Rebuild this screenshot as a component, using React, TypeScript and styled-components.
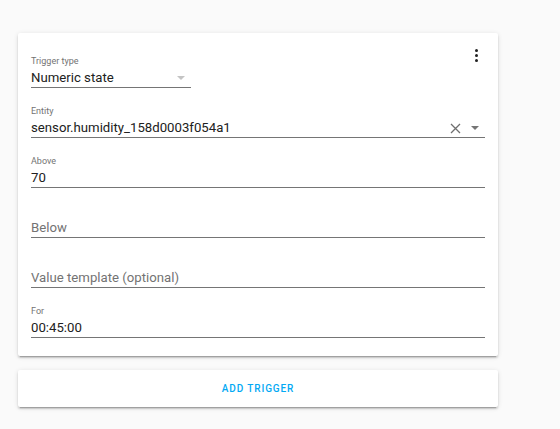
import React from 'react';
import styled, {createGlobalStyle} from 'styled-components';

const GlobalStyle = createGlobalStyle`
  html, body {
    margin: 0;
    background: #fafafa;
    font-family: Roboto, "Noto Sans", Arial, sans-serif;
  }
`;

const Page = styled.div`
  padding: 33px 0 20px 18px;
  width: 480px;
  display: flex;
  flex-direction: column;
  gap: 14px;
`;

const Card = styled.div`
  position: relative;
  background: #fff;
  border-radius: 2px;
  box-shadow: 0 2px 2px 0 rgba(0, 0, 0, 0.14), 0 1px 5px 0 rgba(0, 0, 0, 0.12), 0 3px 1px -2px rgba(0, 0, 0, 0.2);
`;

const Body = styled.div`
  padding: 23px 13px 18px;
  display: flex;
  flex-direction: column;
  gap: 18px;
`;

const Field = styled.div<{$width?: number}>`
  width: ${p => (p.$width ? `${p.$width}px` : 'auto')};
  border-bottom: 1px solid #757575;
`;

const Label = styled.div`
  height: 11px;
  line-height: 11px;
  font-size: 9px;
  color: #737373;
  margin-bottom: 2px;
`;

const InputRow = styled.div`
  display: flex;
  align-items: center;
  height: 18px;
  line-height: 18px;
  font-size: 13.2px;
`;

const Value = styled.span<{$placeholder?: boolean}>`
  flex: 1;
  color: ${p => (p.$placeholder ? '#737373' : '#212121')};
  white-space: nowrap;
`;

const IconBox = styled.span`
  display: flex;
  align-items: center;
  justify-content: center;
  width: 20px;
  height: 18px;
`;

const MenuButton = styled.span`
  position: absolute;
  top: 16px;
  right: 20px;
  display: flex;
  flex-direction: column;
  gap: 2px;
  align-items: center;
`;

const Dot = styled.span`
  width: 3px;
  height: 3px;
  border-radius: 50%;
  background: #212121;
`;

const ActionCard = styled(Card)`
  height: 37px;
  display: flex;
  align-items: center;
  justify-content: center;
`;

const ActionButton = styled.button`
  border: none;
  background: none;
  font-family: inherit;
  font-size: 10px;
  font-weight: 500;
  letter-spacing: 0.09em;
  color: #03a9f4;
  text-transform: uppercase;
  cursor: pointer;
  padding: 0;
`;

const Arrow: React.FC<{color: string}> = ({color}) => (
  <svg width="8" height="4" viewBox="0 0 8 4">
    <path d="M0 0 L8 0 L4 4 Z" fill={color} />
  </svg>
);

const Clear = () => (
  <svg width="11" height="11" viewBox="0 0 11 11">
    <path d="M1 1 L10 10 M10 1 L1 10" stroke="#6f6f6f" strokeWidth="1.3" />
  </svg>
);

const TextField: React.FC<{label?: string; value?: string; placeholder?: string}> = ({label, value, placeholder}) => (
  <Field>
    <Label>{label}</Label>
    <InputRow>
      <Value $placeholder={!value}>{value || placeholder}</Value>
    </InputRow>
  </Field>
);

export default function App() {
  return (
    <>
      <GlobalStyle />
      <Page>
        <Card>
          <MenuButton>
            <Dot /><Dot /><Dot />
          </MenuButton>
          <Body>
            <Field $width={160}>
              <Label>Trigger type</Label>
              <InputRow>
                <Value>Numeric state</Value>
                <IconBox><Arrow color="#c4c4c4" /></IconBox>
              </InputRow>
            </Field>
            <Field>
              <Label>Entity</Label>
              <InputRow>
                <Value>sensor.humidity_158d0003f054a1</Value>
                <IconBox><Clear /></IconBox>
                <IconBox><Arrow color="#757575" /></IconBox>
              </InputRow>
            </Field>
            <TextField label="Above" value="70" />
            <TextField placeholder="Below" />
            <TextField placeholder="Value template (optional)" />
            <TextField label="For" value="00:45:00" />
          </Body>
        </Card>
        <ActionCard>
          <ActionButton>Add trigger</ActionButton>
        </ActionCard>
      </Page>
    </>
  );
}
